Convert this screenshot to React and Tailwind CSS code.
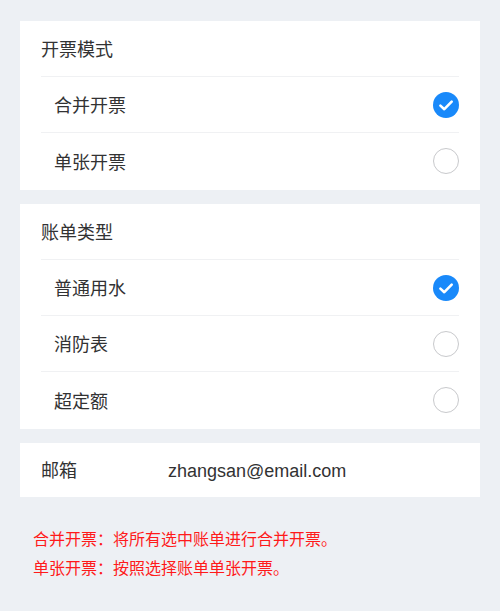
import { useState } from "react";

const FONT = { fontFamily: '"Liberation Sans", "Noto Sans CJK SC", sans-serif' };

function Radio({ checked }) {
  if (checked) {
    return (
      <svg width="26" height="26" viewBox="0 0 26 26">
        <circle cx="13" cy="13" r="13" fill="#1989fa" />
        <path d="M7.4 13.6l3.9 3.6 7.4-7.6" fill="none" stroke="#fff" strokeWidth="2.6" strokeLinecap="round" strokeLinejoin="round" />
      </svg>
    );
  }
  return <div className="w-[26px] h-[26px] rounded-full border-[1.5px] border-[#c8c9cc]" />;
}

function OptionGroup({ title, options, value, onChange }) {
  return (
    <div className="bg-white px-[21px] pb-px">
      <div className="h-14 flex items-center pt-[3px] border-b border-[#f0f1f3] text-[18px] text-[#323233]">{title}</div>
      {options.map((o, i) => (
        <div
          key={o}
          onClick={() => onChange(o)}
          className={`h-14 flex items-center justify-between pl-[13px] cursor-pointer ${i < options.length - 1 ? "border-b border-[#f0f1f3]" : ""}`}
        >
          <span className="text-[18px] text-[#323233] pt-[4px]">{o}</span>
          <Radio checked={value === o} />
        </div>
      ))}
    </div>
  );
}

export default function App() {
  const [mode, setMode] = useState("合并开票");
  const [type, setType] = useState("普通用水");

  return (
    <div className="min-h-screen bg-[#edf0f4] px-5 pt-[21px]" style={FONT}>
      <OptionGroup title="开票模式" options={["合并开票", "单张开票"]} value={mode} onChange={setMode} />
      <div className="mt-[14px]">
        <OptionGroup title="账单类型" options={["普通用水", "消防表", "超定额"]} value={type} onChange={setType} />
      </div>
      <div className="mt-[14px] bg-white h-[54px] flex items-center pt-[2px] px-[21px] text-[18px] text-[#323233]">
        <span className="w-[127px]">邮箱</span>
        <span>zhangsan@email.com</span>
      </div>
      <div className="mt-[28px] pl-[13px] text-[16px] leading-[29px] text-[#ff1a1a]">
        <p>合并开票：将所有选中账单进行合并开票。</p>
        <p>单张开票：按照选择账单单张开票。</p>
      </div>
    </div>
  );
}
